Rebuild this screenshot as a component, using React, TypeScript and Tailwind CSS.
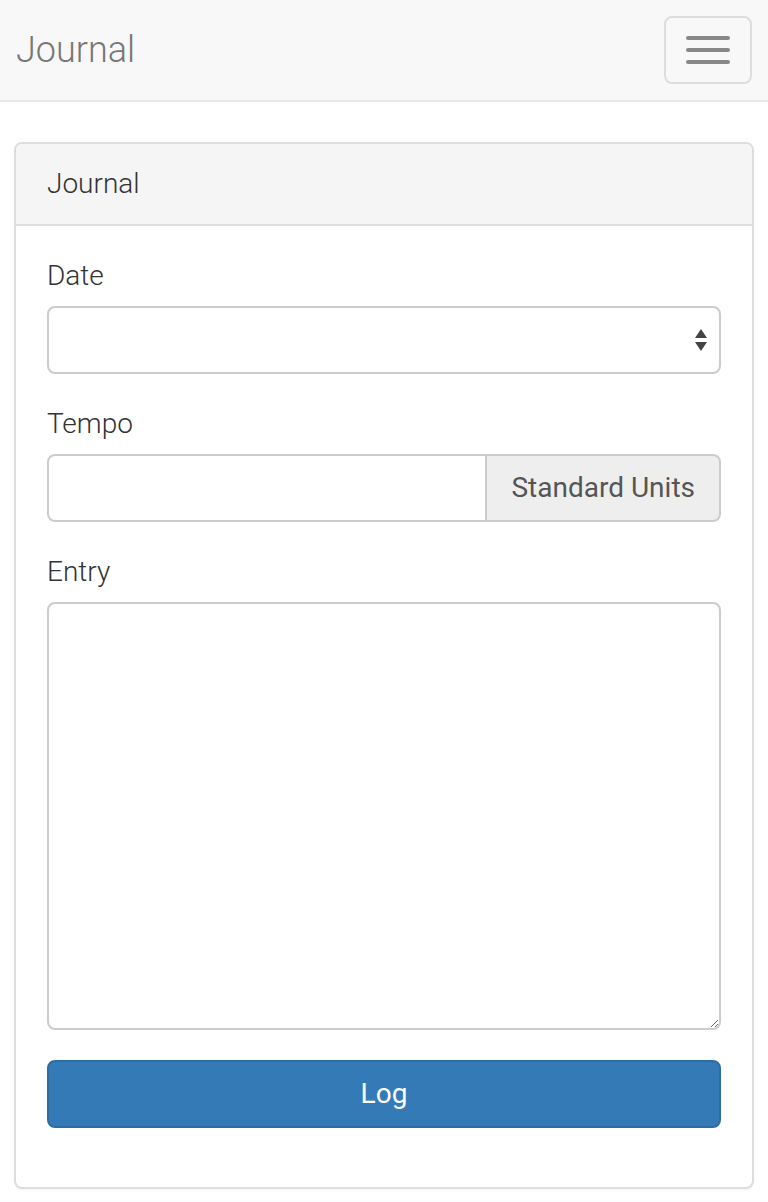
export default function App() {
  return (
    <div className="min-h-screen w-full bg-white text-[#333] font-['Roboto',sans-serif]">
      {/* Navbar */}
      <div className="flex h-[102px] items-start justify-between border-b-2 border-[#e7e7e7] bg-[#f8f8f8] mb-[40px]">
        <div className="pl-[16px] pt-[30px] text-[36px] leading-[40px] text-[#777] font-light">Journal</div>
        <button className="mt-[16px] mr-[16px] flex h-[68px] w-[88px] flex-col items-center justify-center gap-[8px] rounded-[8px] border-2 border-[#ddd]">
          <span className="block h-[4px] w-[44px] rounded-[2px] bg-[#888]" />
          <span className="block h-[4px] w-[44px] rounded-[2px] bg-[#888]" />
          <span className="block h-[4px] w-[44px] rounded-[2px] bg-[#888]" />
        </button>
      </div>

      {/* Panel */}
      <div className="mx-[14px] rounded-[8px] border-2 border-[#ddd] shadow-[0_1px_2px_rgba(0,0,0,0.05)]">
        <div className="rounded-t-[6px] border-b-2 border-[#ddd] bg-[#f5f5f5] px-[31px] py-[20px] text-[28px] leading-[40px] font-light text-[#333]">
          Journal
        </div>
        <div className="px-[31px] pt-[30px] text-[28px] leading-[40px]">
          <div className="mb-[30px]">
            <label className="mb-[10px] block font-light">Date</label>
            <div className="relative">
              <select className="block h-[68px] w-full appearance-none rounded-[8px] border-2 border-[#ccc] bg-white px-[24px] outline-none" />
              <svg className="pointer-events-none absolute right-[13px] top-[22px]" width="14" height="24" viewBox="0 0 14 24">
                <polygon points="7,1 13,10 1,10" fill="#444" />
                <polygon points="1,14 13,14 7,23" fill="#444" />
              </svg>
            </div>
          </div>

          <div className="mb-[30px]">
            <label className="mb-[10px] block font-light">Tempo</label>
            <div className="flex h-[68px]">
              <input className="min-w-0 flex-1 rounded-l-[8px] border-2 border-[#ccc] bg-white px-[24px] outline-none" />
              <span className="flex items-center whitespace-nowrap rounded-r-[8px] border-2 border-l-0 border-[#ccc] bg-[#eee] px-[24px] text-[#555]">
                Standard Units
              </span>
            </div>
          </div>

          <div className="mb-[30px]">
            <label className="mb-[10px] block font-light">Entry</label>
            <textarea className="block h-[428px] w-full rounded-[8px] border-2 border-[#ccc] bg-white px-[24px] py-[12px] outline-none" />
          </div>

          <button className="block h-[68px] w-full rounded-[8px] border-2 border-[#2e6da4] bg-[#337ab7] text-[28px] text-white">
            Log
          </button>
        </div>
        <div className="h-[59px]" />
      </div>
    </div>
  )
}
